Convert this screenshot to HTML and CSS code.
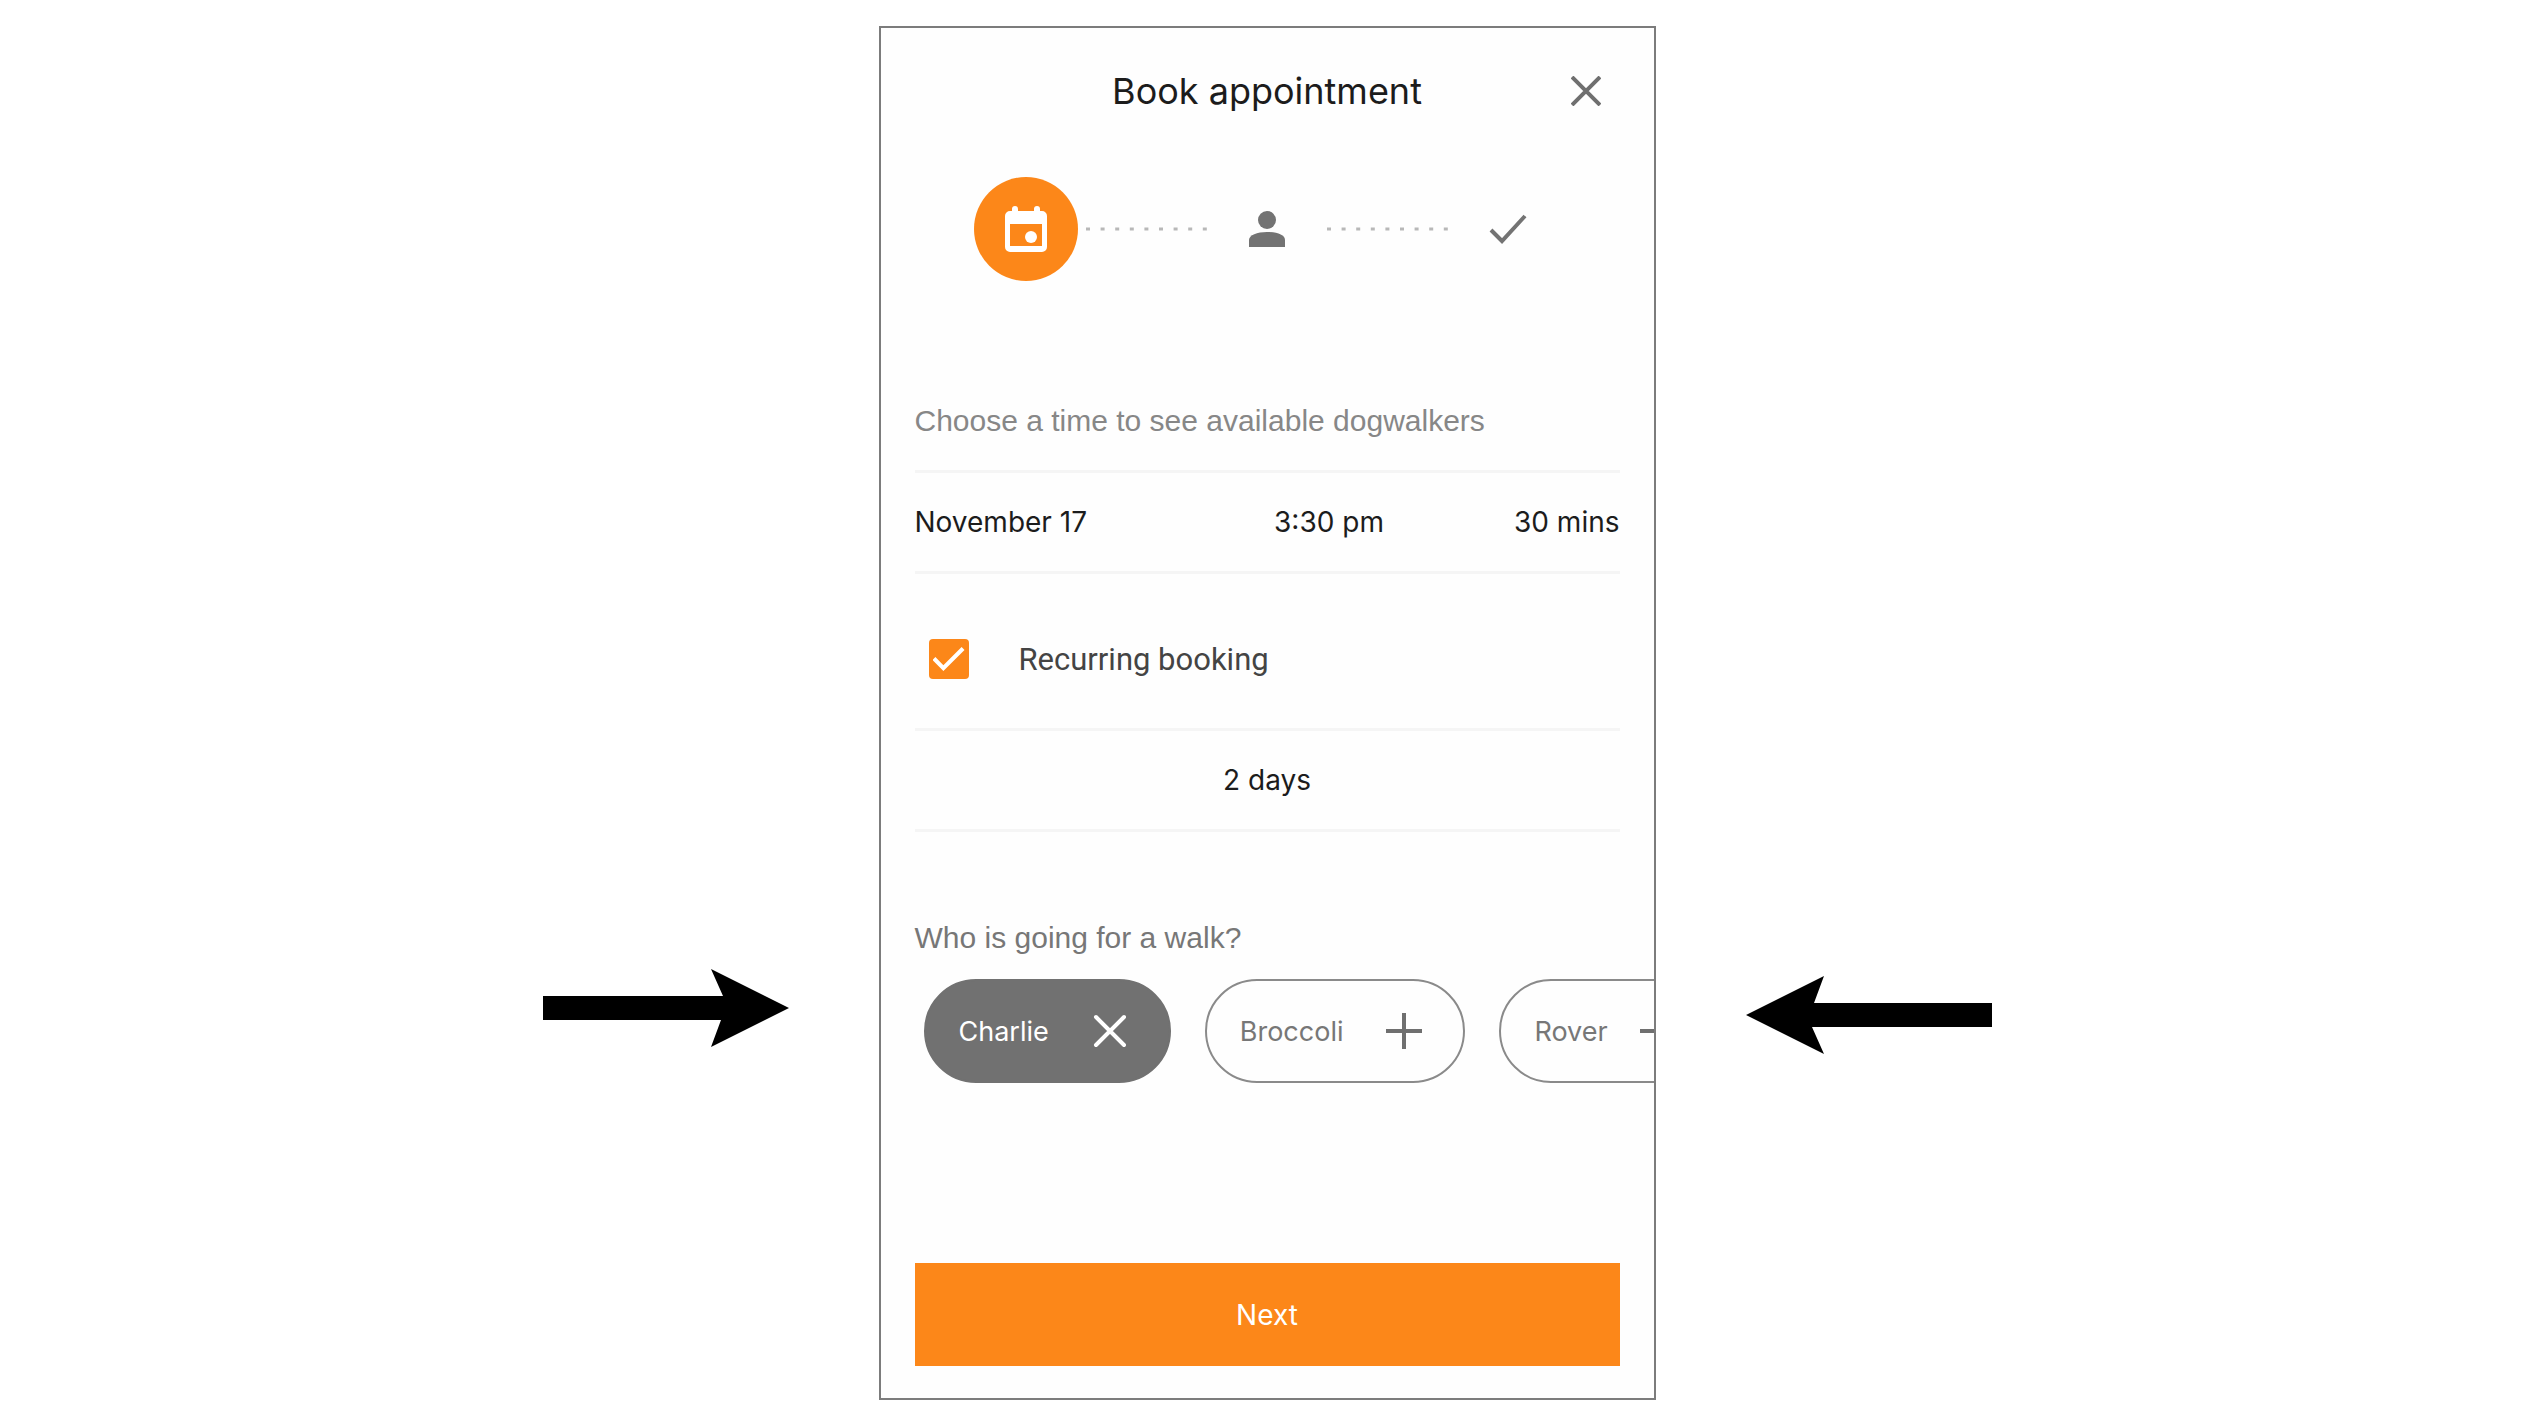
FILE: index.html
```html
<!DOCTYPE html>
<html lang="en">
<head>
	<meta charset="utf-8">
	<meta name="viewport" content="width=device-width, initial-scale=1">
	<title>Book appointment</title>
	<link rel="stylesheet" href="styles.css">
</head>
<body>
	<div class="stage">
		<svg class="arrow arrow-left" viewBox="0 0 246 78" aria-hidden="true">
			<path d="M0 27H180L168 0L246 39L168 78L178 51H0Z"/>
		</svg>

		<main class="phone">
			<header class="header">
				<h1>Book appointment</h1>
				<button class="close" type="button" aria-label="Close">
					<svg viewBox="0 0 30 30"><path d="M1 1L29 29M29 1L1 29"/></svg>
				</button>
			</header>

			<ol class="steps">
				<li class="step active">
					<svg class="calendar" viewBox="0 0 42 46">
						<path fill-rule="evenodd" d="M7 3a3 3 0 0 1 6 0v2h16V3a3 3 0 0 1 6 0v2h2a5 5 0 0 1 5 5v31a5 5 0 0 1-5 5H5a5 5 0 0 1-5-5V10a5 5 0 0 1 5-5h2zM5 18v22h32V18z"/>
						<circle cx="26" cy="31" r="6"/>
					</svg>
				</li>
				<li class="dots">
					<svg viewBox="0 0 121 4"><path d="M0 2H121"/></svg>
				</li>
				<li class="step">
					<svg class="person" viewBox="0 0 36 36">
						<circle cx="18" cy="9" r="9"/>
						<path d="M0 36v-7c0-5 8-8 18-8s18 3 18 8v7z"/>
					</svg>
				</li>
				<li class="dots">
					<svg viewBox="0 0 121 4"><path d="M0 2H121"/></svg>
				</li>
				<li class="step">
					<svg class="check" viewBox="0 0 38 30"><path d="M2 16L13 27L36 2"/></svg>
				</li>
			</ol>

			<form class="form">
				<p class="label">Choose a time to see available dogwalkers</p>
				<div class="row">
					<button type="button">November 17</button>
					<button type="button">3:30 pm</button>
					<button type="button">30 mins</button>
				</div>

				<label class="recurring">
					<input type="checkbox" checked>
					<span>Recurring booking</span>
				</label>
				<div class="row single">
					<button type="button">2 days</button>
				</div>

				<p class="label who">Who is going for a walk?</p>
				<div class="chips">
					<button class="chip selected" type="button">
						Charlie
						<svg viewBox="0 0 36 36"><path d="M4 4L32 32M32 4L4 32"/></svg>
					</button>
					<button class="chip" type="button">
						Broccoli
						<svg viewBox="0 0 36 36"><path d="M18 0V36M0 18H36"/></svg>
					</button>
					<button class="chip" type="button">
						Rover
						<svg viewBox="0 0 36 36"><path d="M18 0V36M0 18H36"/></svg>
					</button>
				</div>

				<button class="next" type="submit">Next</button>
			</form>
		</main>

		<svg class="arrow arrow-right" viewBox="0 0 246 78" aria-hidden="true">
			<path d="M246 27H68L78 0L0 39L78 78L66 51H246Z"/>
		</svg>
	</div>
</body>
</html>
```
FILE: styles.css
```css
* {
	box-sizing: border-box;
}
body {
	margin: 0;
	background: #fff;
	font-family: Inter, "Liberation Sans", sans-serif;
	font-size: 28px;
	color: #1c1c1c;
}
button {
	padding: 0;
	border: 0;
	background: none;
	font: inherit;
	color: inherit;
	white-space: nowrap;
	cursor: pointer;
}
svg {
	display: block;
	flex: none;
}
.stage {
	display: flex;
	justify-content: center;
	align-items: flex-start;
	gap: 90px;
	padding: 26px 20px 20px 16px;
}
.arrow {
	width: 246px;
	height: 78px;
}
.arrow-left {
	margin-top: 943px;
}
.arrow-right {
	margin-top: 950px;
}
.phone {
	flex: 0 1 777px;
	min-width: 0;
	padding: 0 34px 32px;
	border: 2px solid #7c7c7c;
	background: #fefefe;
	overflow: hidden;
}

/* header */
.header {
	display: grid;
	grid-template-columns: 68px 1fr 68px;
	align-items: center;
	height: 126px;
}
.header h1 {
	grid-column: 2;
	margin: 0;
	font-size: 36px;
	font-weight: 400;
	text-align: center;
}
.close {
	justify-self: center;
}
.close svg {
	width: 30px;
	height: 30px;
	fill: none;
	stroke: #6f6f6f;
	stroke-width: 4;
}

/* progress */
.steps {
	display: flex;
	justify-content: center;
	align-items: center;
	gap: 8px;
	margin: 0;
	padding: 23px 0 0;
	list-style: none;
}
.step {
	display: flex;
	justify-content: center;
	align-items: center;
	width: 104px;
	height: 104px;
	border-radius: 50%;
	fill: #737373;
}
.step.active {
	background: #fc8719;
	fill: #fff;
}
.calendar {
	width: 42px;
	height: 46px;
}
.person {
	width: 36px;
	height: 36px;
}
.check {
	width: 38px;
	height: 30px;
	fill: none;
	stroke: #737373;
	stroke-width: 4;
}
.dots svg {
	width: 121px;
	height: 4px;
	stroke: #b8b8b8;
	stroke-width: 3;
	stroke-dasharray: 4 10.6;
}

/* form */
.label {
	margin: 0;
	padding-top: 122px;
	line-height: 36px;
	font-family: "Liberation Sans", sans-serif;
	font-size: 30px;
	color: #878787;
}
.row {
	display: grid;
	grid-template-columns: 51% 1fr auto;
	align-items: center;
	height: 104px;
	margin-top: 31px;
	border-top: 3px solid #f5f5f5;
	border-bottom: 3px solid #f5f5f5;
}
.row button {
	text-align: left;
}
.recurring {
	display: flex;
	align-items: center;
	gap: 50px;
	height: 154px;
	padding: 16px 14px 0;
	font-family: Roboto, sans-serif;
	font-size: 31px;
	color: #444;
}
.recurring input {
	appearance: none;
	display: grid;
	place-items: center;
	width: 40px;
	height: 40px;
	margin: 0;
	border-radius: 4px;
	background: #fc8719;
}
.recurring input:checked::before {
	content: "";
	width: 32px;
	height: 24px;
	background: #fff;
	clip-path: polygon(0 54%, 9% 42%, 34% 76%, 91% 0, 100% 12%, 34% 100%);
}
.row.single {
	grid-template-columns: 1fr;
	margin-top: 0;
}
.row.single button {
	text-align: center;
}
.who {
	padding-top: 88px;
	color: #777;
}
.chips {
	display: flex;
	gap: 34px;
	margin: 23px -34px 0 0;
	padding-left: 9px;
	overflow: hidden;
}
.chip {
	display: flex;
	flex: none;
	align-items: center;
	gap: 43px;
	height: 104px;
	padding: 0 41px 0 33px;
	border: 2px solid #8a8a8a;
	border-radius: 52px;
	font-size: 27px;
	color: #777;
}
.chip:last-child {
	gap: 32px;
}
.chip svg {
	width: 36px;
	height: 36px;
	fill: none;
	stroke: #6f6f6f;
	stroke-width: 4;
}
.chip.selected {
	border-color: #717171;
	background: #717171;
	color: #fff;
}
.chip.selected svg {
	stroke: #fff;
	stroke-linecap: round;
}
.next {
	display: block;
	width: 100%;
	height: 103px;
	margin-top: 180px;
	background: #fc8719;
	color: #fff;
}
```
